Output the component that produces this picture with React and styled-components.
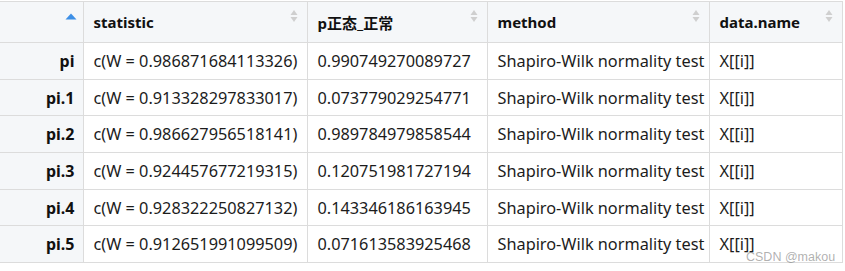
import React from "react";
import styled, { createGlobalStyle } from "styled-components";

const GlobalStyle = createGlobalStyle`
  html, body {
    margin: 0;
    padding: 0;
    background: #fff;
  }
  body {
    padding-top: 1px;
    font-family: "Noto Sans", "Noto Sans CJK SC", sans-serif;
  }
`;

const Table = styled.table`
  width: 842px;
  border-collapse: collapse;
  table-layout: fixed;
  font-size: 16.3px;
  color: #1c1c1c;
`;

const HeadCell = styled.th`
  position: relative;
  height: 40px;
  padding: 0 10px;
  background: #f5f7f9;
  border-top: 1px solid #dcdcdc;
  border-bottom: 1px solid #dcdcdc;
  border-left: ${(p) => (p.first ? "none" : "1px solid #dcdcdc")};
  border-right: ${(p) => (p.last ? "1px solid #dcdcdc" : "none")};
  text-align: left;
  font-size: 15px;
  font-weight: 700;
  color: #111;
  white-space: nowrap;
`;

const RowName = styled.th`
  height: 35.7px;
  padding: 0 8px 0 0;
  background: #f5f7f9;
  border-bottom: 1px solid #dcdcdc;
  text-align: right;
  font-size: 16px;
  font-weight: 700;
  color: #111;
`;

const Cell = styled.td`
  height: 35.7px;
  padding: 0 10px;
  border-left: 1px solid #dcdcdc;
  border-right: ${(p) => (p.last ? "1px solid #dcdcdc" : "none")};
  border-bottom: 1px solid #dcdcdc;
  white-space: nowrap;
  overflow: hidden;
`;

const SortIcon = styled.svg`
  position: absolute;
  top: ${(p) => (p.active ? "11px" : "7px")};
  right: ${(p) => (p.active ? "6px" : "9px")};
`;

const Watermark = styled.span`
  position: absolute;
  left: 746px;
  top: 249px;
  white-space: nowrap;
  font-family: "Liberation Sans", Arial, sans-serif;
  font-size: 12.5px;
  line-height: 15px;
  color: rgba(110, 110, 110, 0.55);
`;

const Page = styled.div`
  position: relative;
`;

const columns = [
  { key: "statistic", label: "statistic", width: 224 },
  { key: "p", label: "p正态_正常", width: 180 },
  { key: "method", label: "method", width: 222 },
  { key: "data", label: "data.name", width: 133 },
];

const rows = [
  ["pi", "c(W = 0.986871684113326)", "0.990749270089727"],
  ["pi.1", "c(W = 0.913328297833017)", "0.073779029254771"],
  ["pi.2", "c(W = 0.986627956518141)", "0.989784979858544"],
  ["pi.3", "c(W = 0.924457677219315)", "0.120751981727194"],
  ["pi.4", "c(W = 0.928322250827132)", "0.143346186163945"],
  ["pi.5", "c(W = 0.912651991099509)", "0.071613583925468"],
];

const SortBoth = () => (
  <SortIcon width="8" height="14" viewBox="0 0 8 14">
    <path d="M4 1 L7.5 6 L0.5 6 Z" fill="#cfcfcf" />
    <path d="M4 13 L7.5 8 L0.5 8 Z" fill="#cfcfcf" />
  </SortIcon>
);

const SortUp = () => (
  <SortIcon active width="12" height="7" viewBox="0 0 12 7">
    <path d="M6 0.5 L11.5 6.5 L0.5 6.5 Z" fill="#3d8fe6" />
  </SortIcon>
);

const App = () => (
  <Page>
    <GlobalStyle />
    <Table>
      <colgroup>
        <col style={{ width: 83 }} />
        {columns.map((c) => (
          <col key={c.key} style={{ width: c.width }} />
        ))}
      </colgroup>
      <thead>
        <tr>
          <HeadCell first>
            <SortUp />
          </HeadCell>
          {columns.map((c, i) => (
            <HeadCell key={c.key} last={i === columns.length - 1}>
              {c.label}
              <SortBoth />
            </HeadCell>
          ))}
        </tr>
      </thead>
      <tbody>
        {rows.map(([name, stat, p]) => (
          <tr key={name}>
            <RowName>{name}</RowName>
            <Cell>{stat}</Cell>
            <Cell>{p}</Cell>
            <Cell>Shapiro-Wilk normality test</Cell>
            <Cell last>X[[i]]</Cell>
          </tr>
        ))}
      </tbody>
    </Table>
    <Watermark>CSDN @makou_</Watermark>
  </Page>
);

export default App;
